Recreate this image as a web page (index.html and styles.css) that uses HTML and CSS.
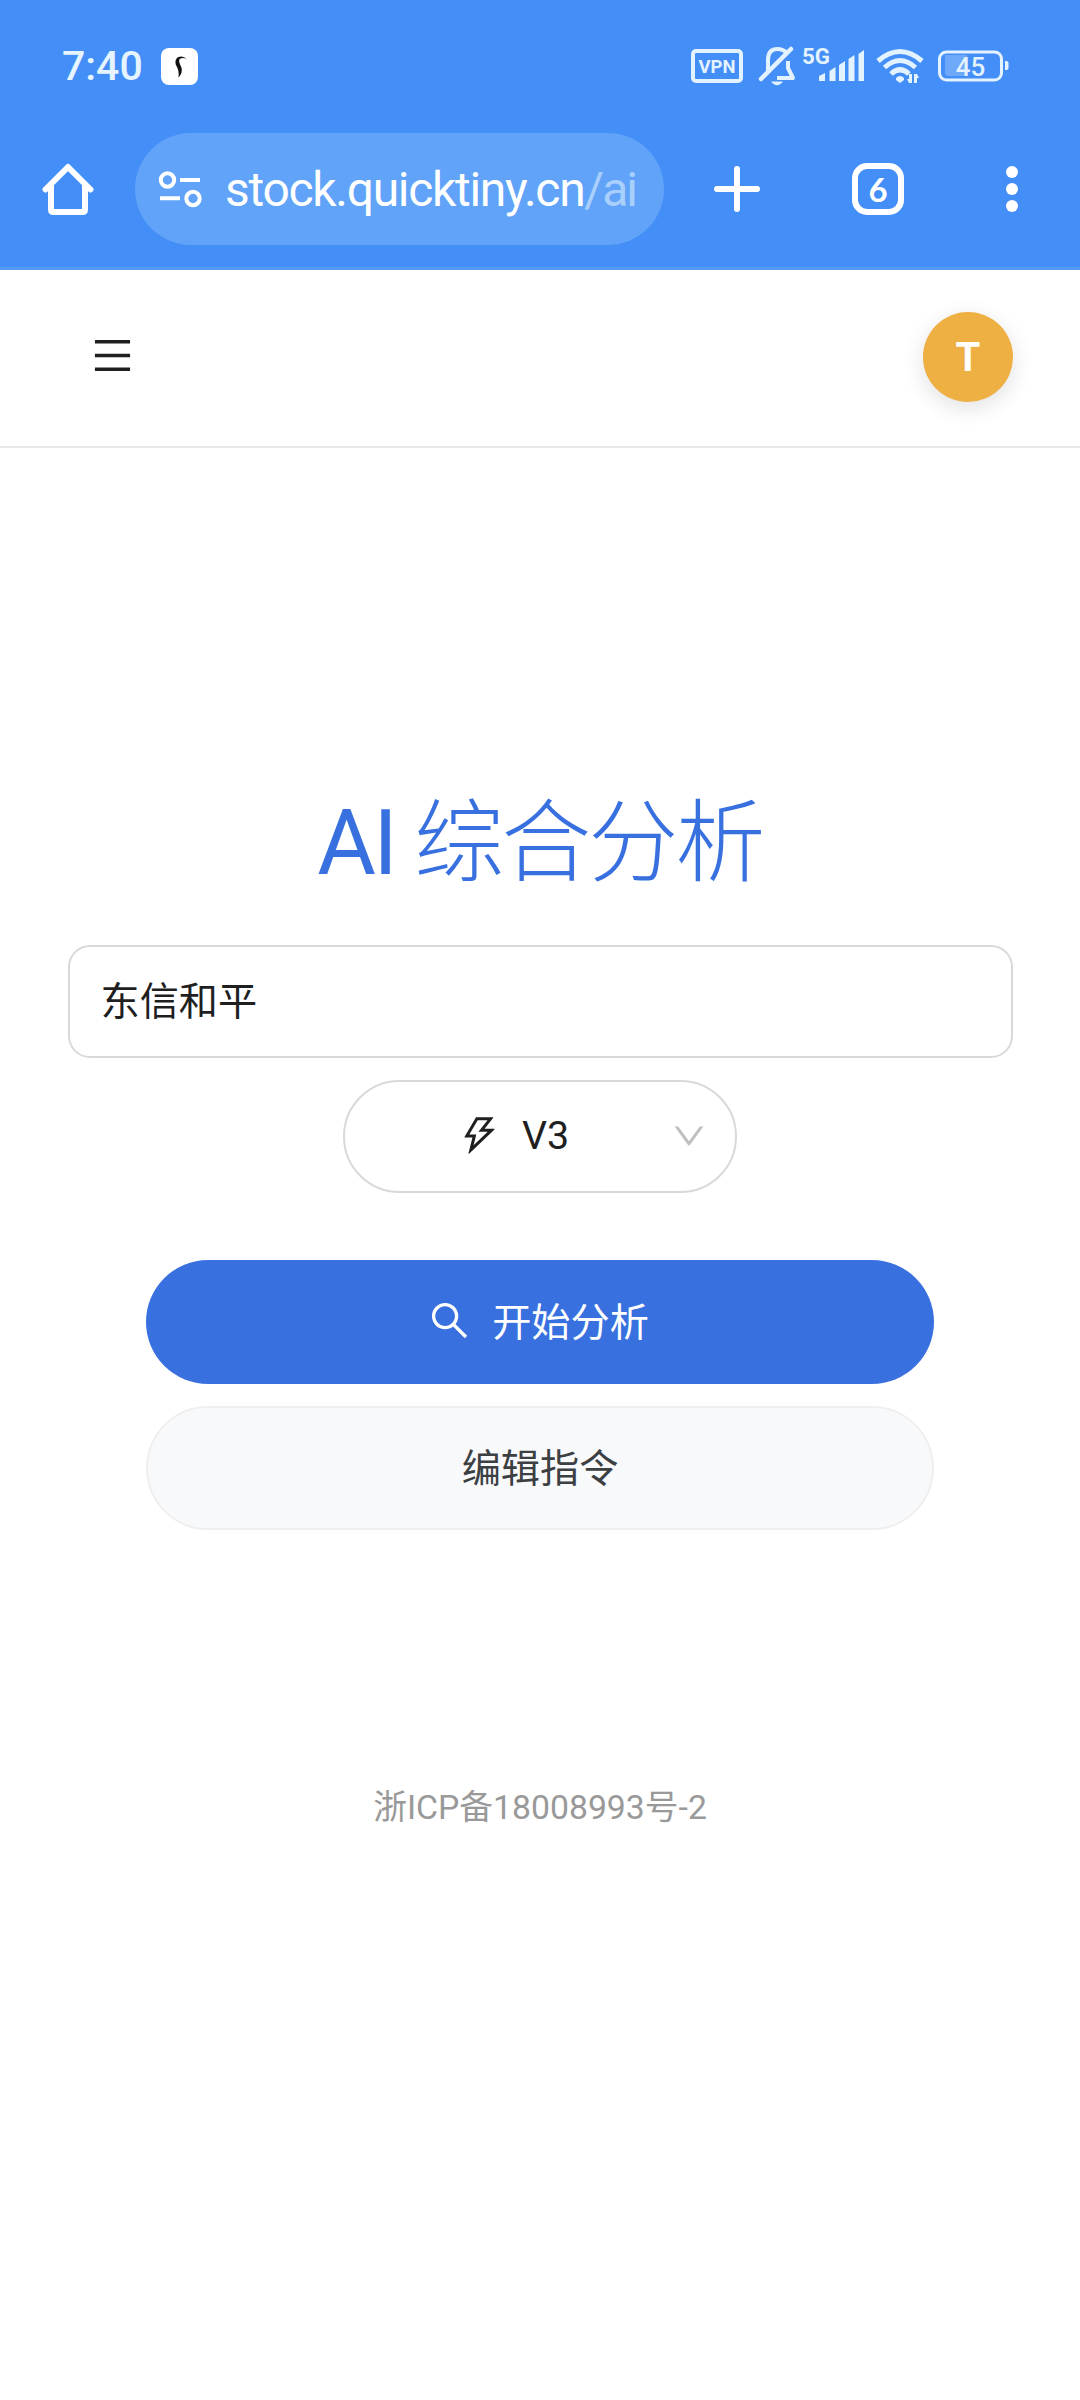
FILE: index.html
```html
<!DOCTYPE html>
<html lang="zh-CN">
<head>
<meta charset="utf-8">
<title>AI 综合分析</title>
<link rel="stylesheet" href="styles.css">
</head>
<body>
<div class="chrome">
  <div class="status">
    <span class="clock">7:40</span>
    <svg class="app-badge" width="37" height="37" viewBox="0 0 37 37"><rect width="37" height="37" rx="8" fill="#fff"/><path d="M26 11.200Q22 7.200 17.500 9C13.500 10.800 14 16 16 19C17.500 22 18 25 17.500 29.500C21 26 21.500 22 20 18.500C18.500 15 17 11.800 19.500 10.400Q22.500 9.200 26 11.200Z" fill="#111"/></svg>
    <svg class="signals" width="330" height="50" viewBox="0 0 330 50">
      <g fill="none" stroke="#e3f2ff" stroke-width="4">
        <rect x="3" y="11" width="48" height="30" rx="3"/>
        <path d="M78 31V20C78 12 82 9 87.500 9C92 9 95 11 97 13M98 21V28L103 38H87" stroke-linejoin="round"/>
        <path d="M71 39L101 9" stroke-width="4.500" stroke-linecap="round"/>
        <g stroke-width="5">
          <path d="M188 21Q210 2 232 21"/><path d="M194.500 27.500Q210 13.500 225.500 27.500"/><path d="M201 34Q210 25.500 219 34"/>
        </g>
        <rect x="249.500" y="12" width="62" height="28" rx="7" stroke-width="3"/>
      </g>
      <g fill="#e3f2ff">
        <path d="M81 41.500H93Q87 49 81 41.500Z"/>
        <path d="M129 36l6-3v8h-6zM139.500 31l6-4v14h-6zM149 25l6-4v20h-6zM158.500 19l6-4v26h-6zM168.500 14l5.500-4v31h-5.500z"/>
        <path d="M206 38Q210 34 214 38V40L210 43L206 40Z"/>
        <path d="M222 34v9h-3l-2-4h2v-5zM224 43v-9h3l2 4h-2v5z"/>
        <path d="M315 21h1.500q2 0 2 2v5q0 2-2 2h-1.500z"/>
        <path d="M255 15h22v21h-18q-4 0-4-4z" opacity=".27"/>
        <g class="signal-text">
          <text x="27" y="32.500" font-size="19" font-weight="700" text-anchor="middle" textLength="37" lengthAdjust="spacingAndGlyphs">VPN</text>
          <text x="112" y="23.500" font-size="21.500" font-weight="700" textLength="28" lengthAdjust="spacingAndGlyphs">5G</text>
          <text x="280.500" y="35.500" font-size="26" font-weight="500" text-anchor="middle">45</text>
        </g>
      </g>
    </svg>
  </div>
  <div class="toolbar">
    <svg class="home" width="52" height="52" viewBox="0 0 52 52" fill="none" stroke="#fff" stroke-width="6" stroke-linejoin="round" stroke-linecap="round"><path d="M3.500 26.500L26 4L48.500 26.500"/><path d="M9 23V46.500Q9 49 11.500 49H40.500Q43 49 43 46.500V23"/></svg>
    <div class="address">
      <svg width="44" height="38" viewBox="0 0 44 38" fill="none" stroke="#fff" stroke-width="4"><circle cx="9.500" cy="10" r="6.700"/><path d="M22 10H42M2 28.300H22"/><circle cx="35" cy="28.500" r="6.700"/></svg>
      <span class="url">stock.quicktiny.cn<span class="url-path">/ai</span></span>
    </div>
    <svg class="plus" width="46" height="46" viewBox="0 0 46 46" stroke="#fff" stroke-width="6" stroke-linecap="round"><path d="M3 23H43M23 3V43"/></svg>
    <div class="tabs">6</div>
    <svg class="more" width="12" height="46" viewBox="0 0 12 46" fill="#fff"><circle cx="6" cy="6" r="6"/><circle cx="6" cy="23" r="6"/><circle cx="6" cy="40" r="6"/></svg>
  </div>
</div>
<header class="page-header">
  <svg class="icon" viewBox="0 0 1024 1024"><path d="M904 160H120c-4.400 0-8 3.600-8 8v64c0 4.400 3.600 8 8 8h784c4.400 0 8-3.600 8-8v-64c0-4.400-3.600-8-8-8zm0 624H120c-4.400 0-8 3.600-8 8v64c0 4.400 3.600 8 8 8h784c4.400 0 8-3.600 8-8v-64c0-4.400-3.600-8-8-8zm0-312H120c-4.400 0-8 3.600-8 8v64c0 4.400 3.600 8 8 8h784c4.400 0 8-3.600 8-8v-64c0-4.400-3.600-8-8-8z"/></svg>
  <div class="avatar">T</div>
</header>
<main class="content">
  <h1 class="title"><span class="title-latin">AI</span> 综合分析</h1>
  <div class="stock-input">东信和平</div>
  <div class="model-select">
    <span class="model">
      <svg class="icon" viewBox="0 0 1024 1024"><path d="M848 359.300H627.700L825.800 109c4.100-5.300.4-13-6.300-13H436c-2.800 0-5.500 1.500-6.900 4L170 547.500c-3.100 5.300.7 12 6.900 12h174.400l-89.400 357.600c-1.900 7.800 7.500 13.300 13.300 7.700L853.500 373c5.200-4.900 1.700-13.700-5.500-13.700zM378.200 732.500l60.300-241H281.100l189.600-327.400h224.600L487 427.400h211L378.200 732.500z"/></svg>
      V3
    </span>
    <svg class="arrow" viewBox="0 0 1024 1024"><path d="M884 256h-75c-5.100 0-9.900 2.500-12.900 6.600L512 654.200 227.900 262.600c-3-4.100-7.800-6.600-12.900-6.600h-75c-6.500 0-10.300 7.400-6.500 12.700l352.600 486.100c12.800 17.600 39 17.600 51.700 0l352.600-486.100c3.900-5.300.1-12.700-6.400-12.700z"/></svg>
  </div>
  <div class="btn btn-primary">
    <svg class="icon" viewBox="0 0 1024 1024"><path d="M909.600 854.500L649.900 594.800C690.200 542.700 712 479 712 412c0-80.200-31.300-155.400-87.900-212.100-56.600-56.700-132-87.900-212.100-87.900s-155.500 31.300-212.100 87.900C143.200 256.500 112 331.800 112 412c0 80.100 31.300 155.500 87.900 212.100C256.500 680.800 331.800 712 412 712c67 0 130.600-21.800 182.700-62l259.700 259.600a8.200 8.200 0 0011.600 0l43.600-43.500a8.200 8.200 0 000-11.600zM570.400 570.400C528 612.700 471.800 636 412 636s-116-23.300-158.400-65.600C211.300 528 188 471.800 188 412s23.300-116.100 65.600-158.400C296 211.300 352.200 188 412 188s116.100 23.200 158.400 65.600S636 352.200 636 412s-23.300 116.100-65.600 158.400z"/></svg>
    <span>开始分析</span>
  </div>
  <div class="btn btn-secondary"><span>编辑指令</span></div>
</main>
<footer class="footer">浙ICP备18008993号-2</footer>
</body>
</html>
```
FILE: styles.css
```css
* { box-sizing: border-box; }
body {
  margin: 0;
  width: 1080px;
  min-height: 2400px;
  background: #fff;
  color: #1f1f1f;
  font-family: Roboto, "Noto Sans CJK SC", sans-serif;
}
svg { display: block; flex: none; }
.chrome {
  height: 270px;
  background: #448ef7;
  border-bottom: 3px solid #5699f5;
}
.status {
  height: 113px;
  padding: 40px 67px 0 62px;
  display: flex;
  align-items: flex-start;
}
.clock {
  width: 99px;
  line-height: 52px;
  font-size: 41px;
  font-weight: 500;
  color: #e6f4ff;
}
.app-badge { margin-top: 8px; }
.signals { margin-left: auto; margin-right: -7px; }
.signal-text { font-family: Roboto, sans-serif; }
.toolbar {
  height: 154px;
  padding: 20px 62px 0 42px;
  display: flex;
  align-items: flex-start;
}
.home { margin-top: 30px; }
.address {
  width: 529px;
  height: 112px;
  margin-left: 41px;
  padding: 0 0 0 23px;
  border-radius: 56px;
  background: #60a3f8;
  display: flex;
  align-items: center;
  gap: 23px;
}
.url {
  padding-top: 2px;
  font-size: 48px;
  line-height: 56px;
  letter-spacing: -1.300px;
  color: #fff;
  white-space: nowrap;
}
.url-path { color: #a9d0fc; letter-spacing: -2px; }
.plus { margin: 33px 0 0 50px; }
.tabs {
  width: 52px;
  height: 52px;
  margin: 30px 0 0 92px;
  border: 6px solid #fff;
  border-radius: 15px;
  color: #fff;
  font-family: Lato, sans-serif;
  font-weight: 700;
  font-size: 33px;
  line-height: 40px;
  text-align: center;
}
.more { margin: 33px 0 0 auto; }
.icon { width: 45px; height: 45px; fill: currentColor; }
.page-header {
  height: 178px;
  padding: 0 67px 2px 90px;
  border-bottom: 2px solid #e8e9eb;
  display: flex;
  align-items: center;
  justify-content: space-between;
}
.page-header .icon { margin-bottom: 3px; }
.avatar {
  width: 90px;
  height: 90px;
  border-radius: 50%;
  background: #eeaf43;
  box-shadow: 0 6px 22px rgba(0, 0, 0, .12);
  color: #fff;
  font-size: 40px;
  font-weight: 700;
  line-height: 91px;
  text-align: center;
}
.content {
  padding: 333px 67px 0;
  display: flex;
  flex-direction: column;
  align-items: center;
}
.title {
  margin: 0;
  height: 164px;
  line-height: 126px;
  font-size: 90px;
  font-weight: 300;
  letter-spacing: -2.800px;
  color: #3871df;
  white-space: nowrap;
}
.title-latin { font-weight: 400; }
.stock-input {
  width: 945px;
  height: 113px;
  padding-left: 31px;
  border: 2px solid #d9d9d9;
  border-radius: 22px;
  font-size: 39.200px;
  line-height: 110px;
}
.model-select {
  width: 394px;
  height: 113px;
  margin-top: 22px;
  padding: 0 27px 2px 112px;
  border: 2px solid #d9d9d9;
  border-radius: 57px;
  display: flex;
  align-items: center;
  justify-content: space-between;
  font-size: 39.400px;
}
.model { display: flex; align-items: center; gap: 20px; }
.arrow { width: 38px; height: 38px; fill: #bfbfbf; }
.btn {
  width: 788px;
  height: 124px;
  border-radius: 62px;
  display: flex;
  align-items: center;
  justify-content: center;
  gap: 20px;
  padding-bottom: 3px;
  font-size: 39.200px;
  font-weight: 400;
}
.btn span { padding-bottom: 3px; }
.btn-primary { margin-top: 67px; padding-right: 4px; background: #3871df; color: #fff; }
.btn-secondary {
  margin-top: 22px;
  background: #f8f9fb;
  border: 2px solid #efefef;
  color: #3c4043;
}
.footer {
  margin-top: 251px;
  line-height: 54px;
  font-size: 33.750px;
  color: #999;
  text-align: center;
}
```
